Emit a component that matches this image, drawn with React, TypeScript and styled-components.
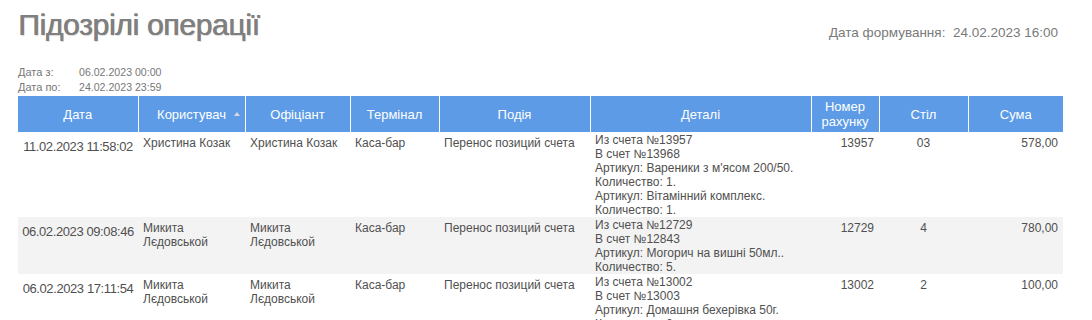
import React from "react";
import styled, { createGlobalStyle } from "styled-components";

type Operation = {
  date: string;
  user: string;
  waiter: string;
  terminal: string;
  event: string;
  details: string[];
  bill: string;
  table: string;
  sum: string;
};

const GlobalStyle = createGlobalStyle`
  html, body {
    margin: 0;
    padding: 0;
    background: #fff;
  }
  body {
    font-family: "Liberation Sans", Arial, sans-serif;
    color: #505050;
  }
`;

const Page = styled.main`
  width: 1045px;
  padding: 8px 0 0 18px;
`;

const TopBar = styled.header`
  display: flex;
  justify-content: space-between;
  align-items: flex-start;
`;

const Title = styled.h1`
  margin: 0;
  font-size: 30px;
  line-height: 34px;
  letter-spacing: -0.3px;
  font-weight: normal;
  color: #7f7f7f;
  text-shadow: 0.7px 0 0 #7f7f7f, 1px 1px 1px rgba(0, 0, 0, 0.15);
`;

const Generated = styled.div`
  margin-top: 17px;
  padding-right: 5px;
  font-size: 13.5px;
  line-height: 16px;
  color: #7a7a7a;
  white-space: pre;
`;

const Period = styled.dl`
  display: grid;
  grid-template-columns: 61px auto;
  margin: 23px 0 1px 0;
  font-size: 11px;
  line-height: 15px;
  color: #777;
  dt,
  dd {
    margin: 0;
  }
  dd {
    font-size: 10.6px;
  }
`;

const Table = styled.table`
  width: 1045px;
  table-layout: fixed;
  border-collapse: collapse;
`;

const HeadCell = styled.th`
  position: relative;
  height: 36px;
  padding: 0 4px;
  background: #5d9be6;
  color: #fff;
  font-size: 13px;
  line-height: 15px;
  font-weight: normal;
  text-align: center;
  vertical-align: middle;
  border-left: 1px solid #fff;
  &:first-child {
    border-left: none;
  }
`;

const SortArrow = styled.span`
  position: absolute;
  right: 5px;
  top: 16px;
  width: 0;
  height: 0;
  border-left: 3.5px solid transparent;
  border-right: 3.5px solid transparent;
  border-bottom: 4px solid #d9d9d9;
`;

const Row = styled.tr<{ $striped?: boolean }>`
  background: ${({ $striped }) => ($striped ? "#f3f3f3" : "#fff")};
`;

const Cell = styled.td<{ $align?: "left" | "center" | "right"; $pad?: number }>`
  padding: ${({ $pad }) => $pad ?? 4}px 5px 0 5px;
  font-size: 12px;
  line-height: 14px;
  vertical-align: top;
  text-align: ${({ $align }) => $align ?? "left"};
  color: #505050;
`;

const DateCell = styled.td`
  padding: 8px 0 0 0;
  font-size: 13px;
  letter-spacing: -0.4px;
  line-height: 14px;
  vertical-align: top;
  text-align: center;
  color: #505050;
`;

const DetailLine = styled.div`
  white-space: nowrap;
`;

const columns = [
  { title: "Дата", width: 120 },
  { title: "Користувач", width: 107, sorted: true },
  { title: "Офіціант", width: 105 },
  { title: "Термінал", width: 89 },
  { title: "Подія", width: 151 },
  { title: "Деталі", width: 221 },
  { title: "Номер рахунку", width: 68 },
  { title: "Стіл", width: 89 },
  { title: "Сума", width: 95 },
];

const operations: Operation[] = [
  {
    date: "11.02.2023 11:58:02",
    user: "Христина Козак",
    waiter: "Христина Козак",
    terminal: "Каса-бар",
    event: "Перенос позиций счета",
    details: [
      "Из счета №13957",
      "В счет №13968",
      "Артикул: Вареники з м'ясом 200/50.",
      "Количество: 1.",
      "Артикул: Вітамінний комплекс.",
      "Количество: 1.",
    ],
    bill: "13957",
    table: "03",
    sum: "578,00",
  },
  {
    date: "06.02.2023 09:08:46",
    user: "Микита Лєдовськой",
    waiter: "Микита Лєдовськой",
    terminal: "Каса-бар",
    event: "Перенос позиций счета",
    details: ["Из счета №12729", "В счет №12843", "Артикул: Могорич на вишні 50мл..", "Количество: 5."],
    bill: "12729",
    table: "4",
    sum: "780,00",
  },
  {
    date: "06.02.2023 17:11:54",
    user: "Микита Лєдовськой",
    waiter: "Микита Лєдовськой",
    terminal: "Каса-бар",
    event: "Перенос позиций счета",
    details: ["Из счета №13002", "В счет №13003", "Артикул: Домашня бехерівка 50г.", "Количество: 6."],
    bill: "13002",
    table: "2",
    sum: "100,00",
  },
];

export default function App() {
  return (
    <>
      <GlobalStyle />
      <Page>
        <TopBar>
          <Title>{"Підозрілі операції"}</Title>
          <Generated>{"Дата формування:  24.02.2023 16:00"}</Generated>
        </TopBar>

        <Period>
          <dt>{"Дата з:"}</dt>
          <dd>{"06.02.2023 00:00"}</dd>
          <dt>{"Дата по:"}</dt>
          <dd>{"24.02.2023 23:59"}</dd>
        </Period>

        <Table>
          <colgroup>
            {columns.map((c) => (
              <col key={c.title} style={{ width: c.width }} />
            ))}
          </colgroup>
          <thead>
            <tr>
              {columns.map((c) => (
                <HeadCell key={c.title}>
                  {c.title}
                  {c.sorted && <SortArrow />}
                </HeadCell>
              ))}
            </tr>
          </thead>
          <tbody>
            {operations.map((op, i) => (
              <Row key={op.date} $striped={i % 2 === 1}>
                <DateCell>{op.date}</DateCell>
                <Cell>{op.user}</Cell>
                <Cell>{op.waiter}</Cell>
                <Cell>{op.terminal}</Cell>
                <Cell>{op.event}</Cell>
                <Cell $pad={1}>
                  {op.details.map((line, j) => (
                    <DetailLine key={j}>{line}</DetailLine>
                  ))}
                </Cell>
                <Cell $align="right">{op.bill}</Cell>
                <Cell $align="center">{op.table}</Cell>
                <Cell $align="right">{op.sum}</Cell>
              </Row>
            ))}
          </tbody>
        </Table>
      </Page>
    </>
  );
}
